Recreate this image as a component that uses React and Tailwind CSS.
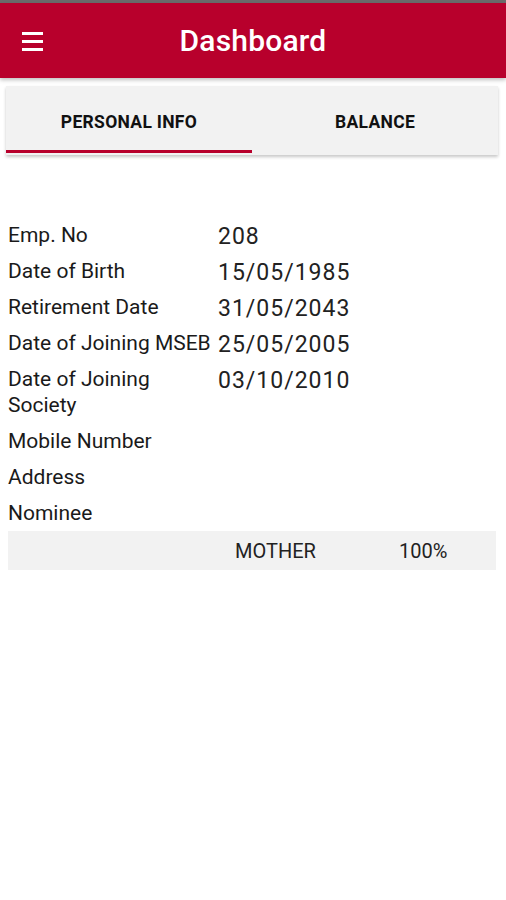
import React from 'react';

const rows = [
  { label: 'Emp. No', value: '208' },
  { label: 'Date of Birth', value: '15/05/1985' },
  { label: 'Retirement Date', value: '31/05/2043' },
  { label: 'Date of Joining MSEB', value: '25/05/2005' },
  { label: 'Date of Joining Society', value: '03/10/2010' },
  { label: 'Mobile Number', value: '' },
  { label: 'Address', value: '' },
  { label: 'Nominee', value: '' },
];

export default function App() {
  return (
    <div className="w-[506px] h-[900px] bg-white text-[#1f1f1f] font-['Roboto',sans-serif] overflow-hidden">
      <div className="h-[3px] bg-[#6b6b6b]" />
      {/* Header */}
      <div className="relative h-[75px] bg-[#b8002c] flex items-center justify-center shadow-[0_2px_4px_rgba(0,0,0,0.25)]">
        <button className="absolute left-[22px] top-[29px] w-[21px] flex flex-col gap-[5px]">
          <span className="block h-[3px] bg-white" />
          <span className="block h-[3px] bg-white" />
          <span className="block h-[3px] bg-white" />
        </button>
        <h1 className="text-white text-[30px] font-medium tracking-[0.2px] leading-none">Dashboard</h1>
      </div>

      {/* Tabs */}
      <div className="mx-[6px] mt-[8px] mr-[8px] bg-[#f2f2f2] shadow-[0_2px_3px_rgba(0,0,0,0.22)] flex h-[69px]">
        <div className="flex-1 flex flex-col">
          <div className="flex-1 flex items-center justify-center pt-[8px] text-[17.5px] font-bold text-[#111] tracking-[0.3px]">PERSONAL INFO</div>
          <div className="h-[3px] bg-[#b8002c] mb-[2px]" />
        </div>
        <div className="flex-1 flex flex-col">
          <div className="flex-1 flex items-center justify-center pt-[8px] text-[17.5px] font-bold text-[#111] tracking-[0.3px]">BALANCE</div>
          <div className="h-[3px] mb-[2px]" />
        </div>
      </div>

      {/* Personal info */}
      <div className="mt-[62px] pl-[8px] pr-[10px]">
        {rows.map((r) => (
          <div key={r.label} className="flex items-start py-[5px]">
            <div className="w-[210px] text-[21px] leading-[26px] text-[#1a1a1a]">{r.label}</div>
            <div className="text-[23px] leading-[23px] pt-[3px] text-[#222] tracking-[1px]">{r.value}</div>
          </div>
        ))}
        <div className="bg-[#f2f2f2] h-[39px] flex items-center text-[20px] text-[#222]">
          <div className="w-[227px]" />
          <div className="w-[164px]">MOTHER</div>
          <div>100%</div>
        </div>
      </div>
    </div>
  );
}
